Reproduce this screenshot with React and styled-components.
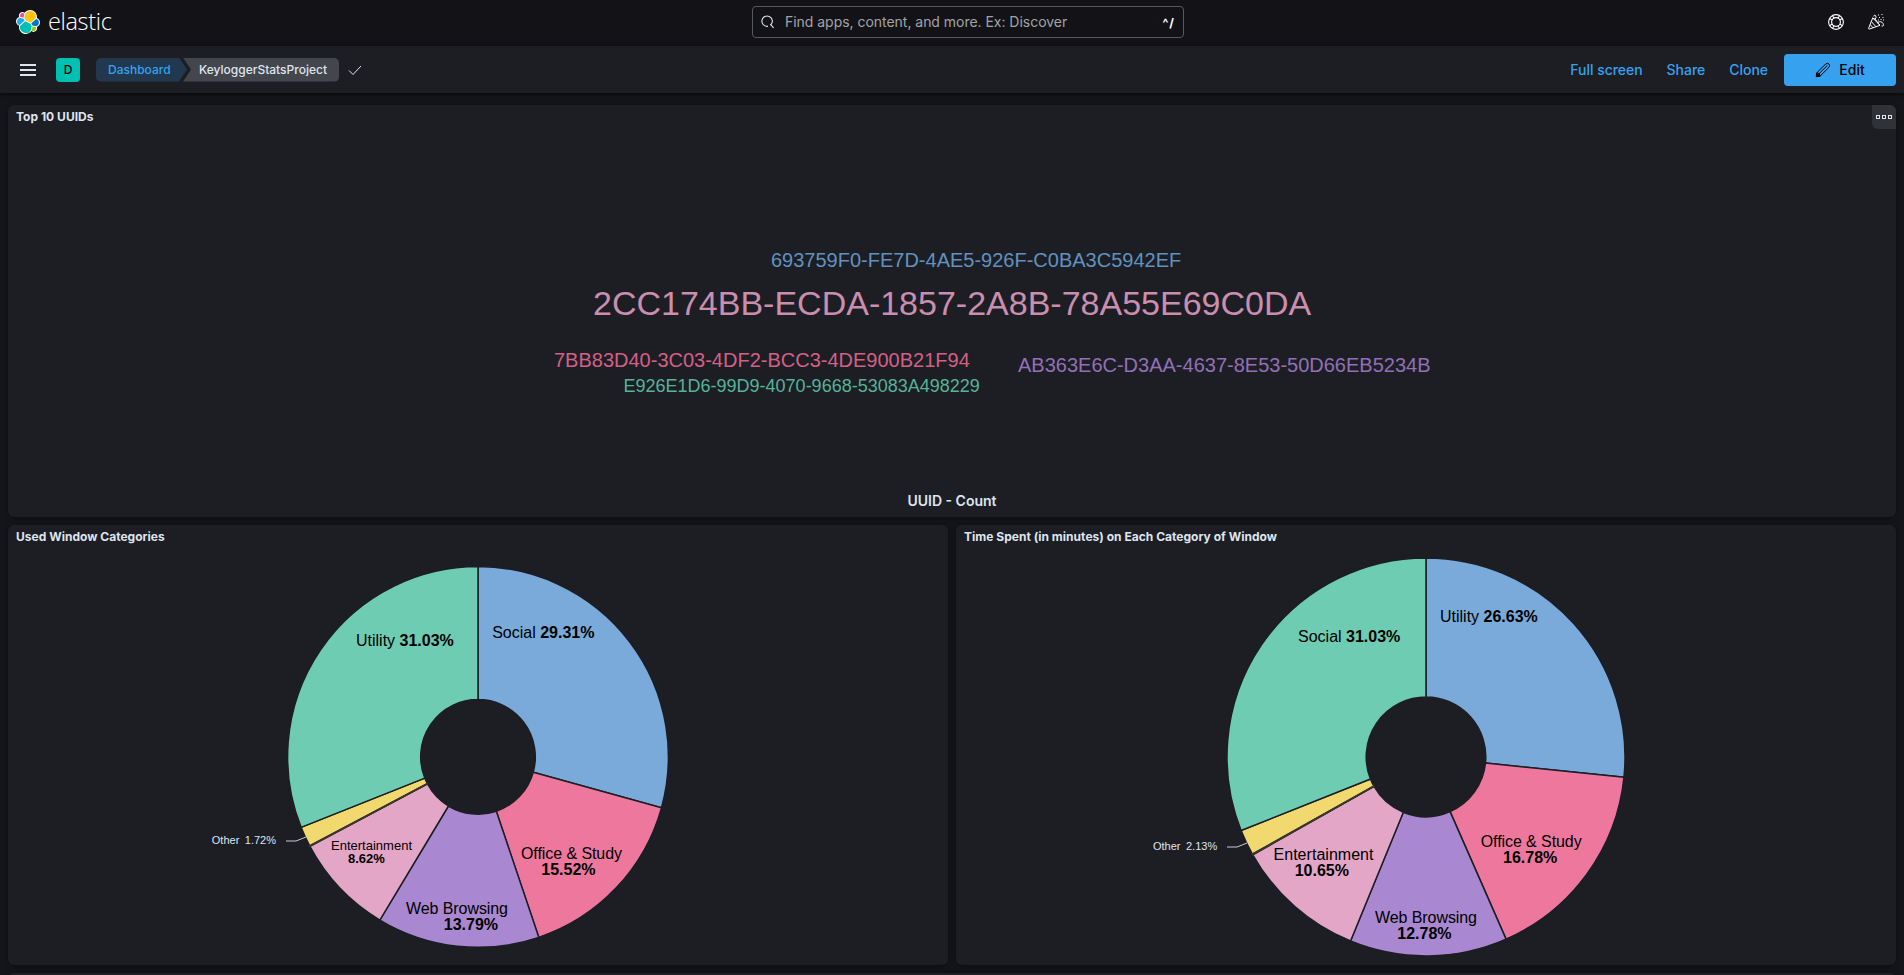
import React from "react";
import styled, { createGlobalStyle } from "styled-components";

const GlobalStyle = createGlobalStyle`
  * { box-sizing: border-box; }
  body {
    margin: 0;
    background: #141519;
    color: #dfe5ef;
    font-family: Inter, "Liberation Sans", sans-serif;
    font-size: 14px;
    overflow: hidden;
  }
`;

const Page = styled.div`
  height: 975px;
  display: flex;
  flex-direction: column;
  overflow: hidden;
`;

const TopBar = styled.header`
  flex: 0 0 46px;
  display: grid;
  grid-template-columns: 736px 432px 1fr;
  align-items: center;
  padding: 0 16px 2px;
  background: #131317;
`;

const Brand = styled.div`
  display: flex;
  align-items: center;
  gap: 8px;
`;

const BrandName = styled.span`
  font-family: "Open Sans", sans-serif;
  font-size: 23.5px;
  font-weight: 300;
  line-height: 28px;
  letter-spacing: -0.35px;
  padding-bottom: 2px;
  color: #fff;
`;

const Search = styled.div`
  display: flex;
  align-items: center;
  height: 32px;
  padding: 0 8px;
  border: 1px solid #58595e;
  border-radius: 4px;
`;

const Placeholder = styled.span`
  flex: 1;
  margin-left: 10px;
  padding-bottom: 2px;
  font-size: 14px;
  letter-spacing: -0.03px;
  color: #a2a3a8;
`;

const Shortcut = styled.span`
  font-size: 12px;
  font-weight: 700;
  letter-spacing: 1px;
  color: #fff;
`;

const TopActions = styled.div`
  display: flex;
  justify-content: flex-end;
  align-items: center;
  gap: 24px;
  padding-right: 4px;
`;

const NavBar = styled.nav`
  flex: 0 0 47px;
  display: flex;
  align-items: center;
  padding: 0 8px 0 20px;
  background: #1d1e24;
  box-shadow: 0 1px 4px rgba(0, 0, 0, 0.7);
`;

const MenuButton = styled.div`
  width: 16px;
  height: 12px;
  display: flex;
  flex-direction: column;
  justify-content: space-between;
`;

const MenuBar = styled.span`
  height: 2px;
  background: #dfe5ef;
`;

const SpaceBadge = styled.div`
  width: 24px;
  height: 24px;
  margin: 0 16px 0 20px;
  display: grid;
  place-items: center;
  border-radius: 4px;
  background: #00bfb3;
  color: #000;
  font-size: 12px;
  font-weight: 500;
`;

const Crumb = styled.div`
  height: 24px;
  line-height: 24px;
  font-size: 12px;
  font-weight: 500;
  white-space: nowrap;
  width: ${(p) => p.$width}px;
  padding-left: ${(p) => p.$indent}px;
  margin-left: ${(p) => p.$offset || 0}px;
  color: ${(p) => p.$color};
  background: ${(p) => p.$bg};
  border-radius: ${(p) => p.$radius};
  clip-path: ${(p) => p.$shape};
`;

const CheckIcon = styled.svg`
  margin-left: 8px;
`;

const NavActions = styled.div`
  margin-left: auto;
  display: flex;
  align-items: center;
`;

const NavLink = styled.span`
  margin-right: ${(p) => p.$gap}px;
  color: #36a2ef;
  font-size: 14px;
  font-weight: 500;
  line-height: 20px;
  letter-spacing: -0.03px;
`;

const EditButton = styled.button`
  display: flex;
  align-items: center;
  justify-content: center;
  gap: 8px;
  width: 112px;
  height: 32px;
  padding: 0;
  border: 0;
  border-radius: 4px;
  background: #36a2ef;
  color: #000;
  font: 500 14px Inter, sans-serif;
`;

const Dashboard = styled.main`
  flex: none;
  display: grid;
  grid-template-columns: 1fr 1fr;
  grid-template-rows: 412px 440px 120px;
  gap: 8px;
  padding: 12px 8px 0;
`;

const Panel = styled.section`
  grid-column: ${(p) => (p.$wide ? "1 / -1" : "auto")};
  display: flex;
  flex-direction: column;
  min-width: 0;
  border-radius: 6px;
  background: #1d1e24;
  box-shadow: 0 1px 5px rgba(0, 0, 0, 0.4);
`;

const PanelHeader = styled.div`
  flex: 0 0 24px;
  display: flex;
  justify-content: space-between;
  padding-left: 8px;
`;

const PanelTitle = styled.h2`
  margin: 0;
  font-size: 12px;
  font-weight: 700;
  line-height: 23px;
  letter-spacing: 0.02px;
`;

const PanelMenu = styled.div`
  width: 24px;
  height: 24px;
  display: flex;
  align-items: center;
  justify-content: center;
  gap: 2px;
  border-radius: 0 6px 0 6px;
  background: #313237;
`;

const MenuSquare = styled.span`
  width: 4px;
  height: 4px;
  border: 1px solid #dfe5ef;
`;

const Drawing = styled.svg`
  display: block;
  font-family: "Liberation Sans", sans-serif;
`;

const CloudCaption = styled.div`
  text-align: center;
  font-size: 14px;
  font-weight: 600;
  line-height: 20px;
`;

const words = [
  { text: "693759F0-FE7D-4AE5-926F-C0BA3C5942EF", x: 771, y: 267, size: 20, color: "#6092c0" },
  { text: "2CC174BB-ECDA-1857-2A8B-78A55E69C0DA", x: 593, y: 315, size: 34, color: "#ca8eae" },
  { text: "7BB83D40-3C03-4DF2-BCC3-4DE900B21F94", x: 554, y: 367, size: 20, color: "#d36086" },
  { text: "AB363E6C-D3AA-4637-8E53-50D66EB5234B", x: 1018, y: 372, size: 20, color: "#9170b8" },
  { text: "E926E1D6-99D9-4070-9668-53083A498229", x: 623.5, y: 392, size: 18, color: "#54b399" },
];

const BLUE = "#79aad9";
const PINK = "#ee789d";
const PURPLE = "#a987d1";
const ROSE = "#e4a6c7";
const YELLOW = "#f1d86f";
const GREEN = "#6dccb1";

const categories = {
  cx: 478, cy: 756.9, outer: 190.4, inner: 57.3,
  slices: [[29.31, BLUE], [15.52, PINK], [13.79, PURPLE], [8.62, ROSE], [1.73, YELLOW], [31.03, GREEN]],
  labels: [
    { name: "Utility", value: "31.03%", x: 356, y: 646 },
    { name: "Social", value: "29.31%", x: 492.2, y: 638 },
    { name: "Office & Study", value: "15.52%", x: 521, y: 859, w: 101, vx: 541.3 },
    { name: "Web Browsing", value: "13.79%", x: 406, y: 914, w: 102, vx: 443.8 },
    { name: "Entertainment", value: "8.62%", x: 331, y: 850, w: 81, vx: 348, size: 13 },
  ],
  other: { value: "1.72%", x: 211.8, y: 844, line: "286,841 296,841 306,837" },
};

const timeSpent = {
  cx: 1426, cy: 756.9, outer: 199, inner: 59.8,
  slices: [[26.63, BLUE], [16.78, PINK], [12.78, PURPLE], [10.65, ROSE], [2.13, YELLOW], [31.03, GREEN]],
  labels: [
    { name: "Social", value: "31.03%", x: 1298, y: 642 },
    { name: "Utility", value: "26.63%", x: 1440, y: 622 },
    { name: "Office & Study", value: "16.78%", x: 1480.7, y: 847, w: 101, vx: 1503 },
    { name: "Web Browsing", value: "12.78%", x: 1375, y: 923, w: 102, vx: 1397.3 },
    { name: "Entertainment", value: "10.65%", x: 1273.5, y: 860, w: 100, vx: 1294.7 },
  ],
  other: { value: "2.13%", x: 1153, y: 850, line: "1227,847 1237,847 1247,843" },
};

const slicePath = ({ cx, cy, outer, inner }, from, to) => {
  const at = (r, t) => `${cx + r * Math.sin(t * 2 * Math.PI)} ${cy - r * Math.cos(t * 2 * Math.PI)}`;
  return `M${at(inner, from)}L${at(outer, from)}A${outer} ${outer} 0 0 1 ${at(outer, to)}L${at(inner, to)}A${inner} ${inner} 0 0 0 ${at(inner, from)}Z`;
};

function Donut({ data, left }) {
  let sum = 0;
  const ends = data.slices.map(([share]) => (sum += share / 100));
  const yellowStart = ends[3] / sum;
  return (
    <Drawing width="940" height="416" viewBox={`${left} 549 940 416`}>
      {data.slices.map(([share, color], i) => (
        <path
          key={color}
          d={slicePath(data, (ends[i] - share / 100) / sum, ends[i] / sum)}
          fill={color}
          stroke="#1d1e24"
          strokeWidth="1.5"
        />
      ))}
      <path d={slicePath(data, yellowStart - 0.0003, yellowStart + 0.0003)} fill="none" stroke="#39352c" strokeWidth="1.7" />
      {data.labels.map((l) => {
        const size = l.size || 16;
        return l.vx ? (
          <g key={l.name} fontSize={size}>
            <text x={l.x} y={l.y} textLength={l.w}>{l.name}</text>
            <text x={l.vx} y={l.y + size} fontWeight="700">{l.value}</text>
          </g>
        ) : (
          <text key={l.name} x={l.x} y={l.y} fontSize={size}>
            {l.name} <tspan fontWeight="700">{l.value}</tspan>
          </text>
        );
      })}
      <g fill="#dfe5ef" fontSize="11">
        <text x={data.other.x} y={data.other.y}>Other</text>
        <text x={data.other.x + 33} y={data.other.y}>{data.other.value}</text>
      </g>
      <polyline points={data.other.line} fill="none" stroke="#c6cad2" />
    </Drawing>
  );
}

const ElasticLogo = () => (
  <svg width="24" height="24" viewBox="0 0 32 32">
    <path fill="#fff" d="M32 16.77c0-2.68-1.66-5.02-4.16-5.94.11-.57.16-1.15.16-1.75C28 4.07 23.93 0 18.93 0c-2.92 0-5.64 1.4-7.34 3.74A4.8 4.8 0 0 0 8.64 2.74c-2.66 0-4.82 2.16-4.82 4.82 0 .58.1 1.14.29 1.66C1.63 10.11 0 12.5 0 15.15c0 2.69 1.67 5.04 4.17 5.95-.11.57-.16 1.15-.16 1.75 0 4.99 4.06 9.05 9.05 9.05 2.93 0 5.63-1.41 7.33-3.76.85.67 1.89 1.03 2.96 1.03 2.66 0 4.82-2.16 4.82-4.82 0-.58-.1-1.14-.29-1.66C30.37 21.8 32 19.41 32 16.77"/>
    <path fill="#FEC514" d="m12.58 13.79 7 3.19 7.06-6.19c.1-.51.15-1.03.15-1.57a7.94 7.94 0 0 0-14.49-4.49L11.13 10.8z"/>
    <path fill="#00BFB3" d="M5.33 21.22c-.1.51-.15 1.04-.15 1.59a7.96 7.96 0 0 0 14.53 4.47l1.16-6.06-1.56-2.98-7.02-3.2z"/>
    <path fill="#F04E98" d="m5.29 9.08 4.8 1.13 1.05-5.45a3.8 3.8 0 0 0-5.85 4.32"/>
    <path fill="#1BA9F5" d="M4.87 10.22a5.36 5.36 0 0 0-3.58 5.03 5.34 5.34 0 0 0 3.42 4.98l6.73-6.08-1.24-2.64z"/>
    <path fill="#93C90E" d="M20.87 27.28a3.79 3.79 0 0 0 5.84-4.31l-4.79-1.12z"/>
    <path fill="#07C" d="m21.85 20.56 5.27 1.23a5.37 5.37 0 0 0 3.58-5.03 5.34 5.34 0 0 0-3.43-4.98l-6.9 6.04z"/>
  </svg>
);

const SearchIcon = () => (
  <svg width="14" height="14" viewBox="0 0 14 14" fill="none" stroke="#dfe5ef" strokeWidth="1.1">
    <path d="M7 11.4H6.2A5.2 5.2 0 1 1 10.2 9.4M9.2 9.2 12.6 12.8" />
  </svg>
);

const HelpIcon = () => (
  <svg width="16" height="16" viewBox="0 0 16 16" fill="none" stroke="#fff" strokeWidth="1.1">
    <circle cx="8" cy="8" r="7.4" />
    <circle cx="8" cy="8" r="4.4" />
    <path d="M1.8 4.6 4.3 6M4.6 1.8 6 4.3M11.4 1.8 10 4.3M14.2 4.6 11.7 6M14.2 11.4 11.7 10M11.4 14.2 10 11.7M4.6 14.2 6 11.7M1.8 11.4 4.3 10" />
  </svg>
);

const CheerIcon = () => (
  <svg width="16" height="16" viewBox="0 0 16 16" fill="none" stroke="#fff">
    <path d="M4.7 4 .6 14.3Q.5 15.3 1.6 15L12 11.3ZM3.3 7.5 8 12.8M2.2 10.5 5 13.8M4.7 4Q8 5 9 7.5T12 11.3M5.8 2.5 6.5.8M7 5.5Q9 3.5 7.5 1.2M9.5 8.5Q13.5 6.5 15 9.5T13.5 12" />
    <path d="M10 1h1M13.5.5h1M11 3.5h1M14.5 3.5h1M12.5 5.5h1M10 6h1M15 6h1" />
  </svg>
);

const PencilIcon = () => (
  <svg width="16" height="16" viewBox="0 0 16 16" fill="none" stroke="#000">
    <path d="M1.8 10.8 10.6 2Q12.6.5 14 2T14 5.3L5.2 14 1.4 14.6ZM3.4 12.4 12.3 3.5M1.8 10.8Q4.8 10.7 5.2 14" />
    <path d="m1.8 11.2 3 3-3.6.6Z" fill="#000" />
  </svg>
);

export default function App() {
  return (
    <Page>
      <GlobalStyle />
      <TopBar>
        <Brand>
          <ElasticLogo />
          <BrandName>elastic</BrandName>
        </Brand>
        <Search>
          <SearchIcon />
          <Placeholder>Find apps, content, and more. Ex: Discover</Placeholder>
          <Shortcut>^/</Shortcut>
        </Search>
        <TopActions>
          <HelpIcon />
          <CheerIcon />
        </TopActions>
      </TopBar>
      <NavBar>
        <MenuButton>
          <MenuBar />
          <MenuBar />
          <MenuBar />
        </MenuButton>
        <SpaceBadge>D</SpaceBadge>
        <Crumb $width={91} $indent={12} $color="#36a2ef" $bg="#22384f" $radius="5px 0 0 5px" $shape="polygon(0 0, 83px 0, 100% 50%, 83px 100%, 0 100%)">
          Dashboard
        </Crumb>
        <Crumb $width={156} $indent={16} $offset={-4} $color="#dfe5ef" $bg="#44464e" $radius="0 5px 5px 0" $shape="polygon(0 0, 100% 0, 100% 100%, 0 100%, 8px 50%)">
          KeyloggerStatsProject
        </Crumb>
        <CheckIcon width="16" height="16" viewBox="0 0 16 16" fill="none" stroke="#dfe5ef">
          <path d="m2 8.5 4 4L14 4" />
        </CheckIcon>
        <NavActions>
          <NavLink $gap={24}>Full screen</NavLink>
          <NavLink $gap={24}>Share</NavLink>
          <NavLink $gap={16}>Clone</NavLink>
          <EditButton>
            <PencilIcon />
            Edit
          </EditButton>
        </NavActions>
      </NavBar>
      <Dashboard>
        <Panel $wide>
          <PanelHeader>
            <PanelTitle>Top 10 UUIDs</PanelTitle>
            <PanelMenu>
              <MenuSquare />
              <MenuSquare />
              <MenuSquare />
            </PanelMenu>
          </PanelHeader>
          <Drawing width="1888" height="362" viewBox="8 129 1888 362">
            {words.map((w) => (
              <text key={w.text} x={w.x} y={w.y} fontSize={w.size} fill={w.color}>
                {w.text}
              </text>
            ))}
          </Drawing>
          <CloudCaption>UUID - Count</CloudCaption>
        </Panel>
        <Panel>
          <PanelHeader>
            <PanelTitle>Used Window Categories</PanelTitle>
          </PanelHeader>
          <Donut data={categories} left={8} />
        </Panel>
        <Panel>
          <PanelHeader>
            <PanelTitle>Time Spent (in minutes) on Each Category of Window</PanelTitle>
          </PanelHeader>
          <Donut data={timeSpent} left={956} />
        </Panel>
        <Panel $wide />
      </Dashboard>
    </Page>
  );
}
